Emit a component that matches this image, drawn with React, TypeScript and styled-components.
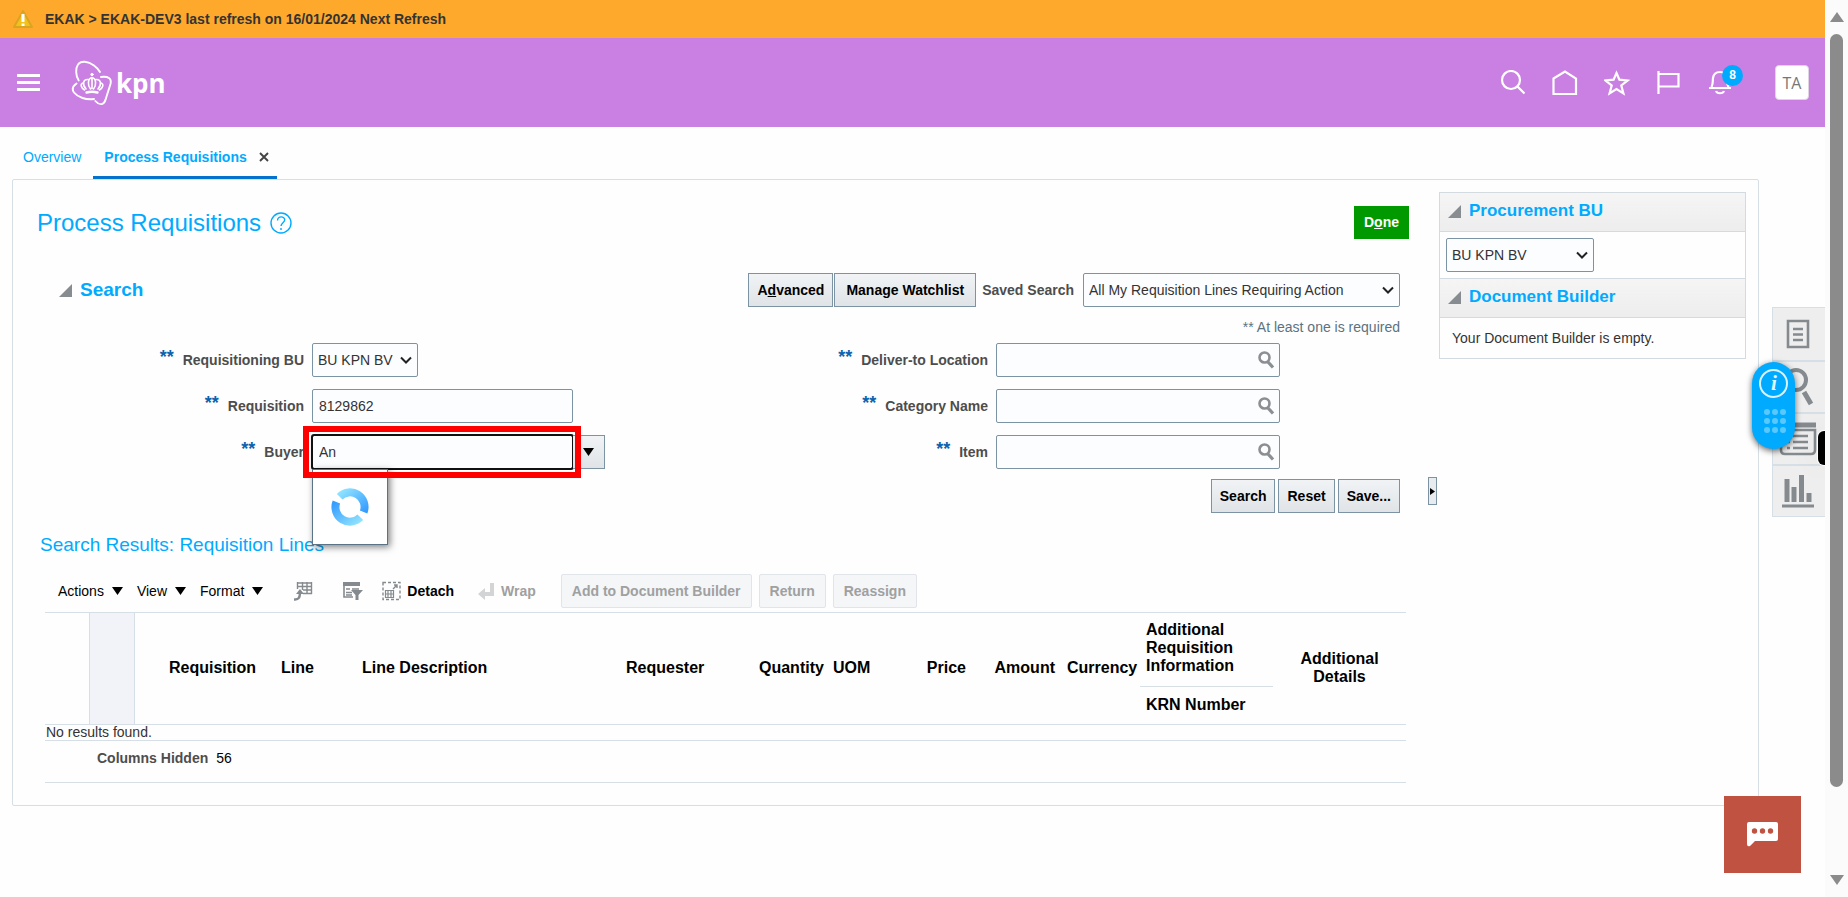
import React from "react";
import styled, { createGlobalStyle } from "styled-components";

const GlobalStyle = createGlobalStyle`
  *, *::before, *::after { box-sizing: border-box; }
  body { margin: 0; background: #fefefe; }
  body, button, input, select { font-family: "Liberation Sans", Arial, sans-serif; font-size: 14px; color: #333; }
  h1, h2, p { margin: 0; }
  button { cursor: pointer; }
`;

const Page = styled.div`display: flex; min-height: 100vh;`;
const Main = styled.div`flex: 1; min-width: 0; position: relative;`;

const ScrollTrack = styled.div`
  width: 23px; background: #fbfbfb; display: flex; flex-direction: column; align-items: center;
  padding: 12px 0; gap: 12px; height: 100vh; position: sticky; top: 0;
`;
const ScrollThumb = styled.div`width: 13px; flex: 1; margin-bottom: 76px; border-radius: 7px; background: #8b8b8b;`;

const Notice = styled.div`
  height: 38px; background: #ffa92c; display: flex; align-items: center; gap: 12px; padding-left: 13px; font-weight: bold;
`;
const Header = styled.header`
  height: 89px; background: #c980e2; display: flex; align-items: center; padding: 0 16px 0 14px;
`;
const IconButton = styled.button`
  border: 0; background: none; padding: 0; width: 28px; height: 28px; display: grid; place-items: center; position: relative;
`;
const HeaderActions = styled.nav`display: flex; align-items: center; gap: 24px; margin-left: auto;`;
const Logo = styled.a`margin-left: 28px; display: flex;`;
const Badge = styled.span`
  position: absolute; left: 15px; top: -4px; width: 21px; height: 21px; border-radius: 50%; background: #0af;
  color: #fff; font-size: 12px; font-weight: bold; line-height: 21px; text-align: center;
`;
const Avatar = styled.button`
  width: 34px; height: 35px; border: 1px solid #ded4e6; border-radius: 4px; background: #fff; color: #777;
  font: 16px "Open Sans", sans-serif; padding: 0; margin-left: 16px;
`;

const Tabs = styled.nav`display: flex; gap: 4px; height: 52px; padding-left: 12px;`;
const Tab = styled.div<{ $active?: boolean }>`
  display: flex; align-items: center; gap: 12px; padding: 12px 8px 0 11px; padding-bottom: ${(p) => (p.$active ? 1 : 4)}px;
  border-bottom: ${(p) => (p.$active ? "3px solid #0572ce" : "0")};
  a { color: #0af; text-decoration: none; font-weight: ${(p) => (p.$active ? "bold" : "normal")}; }
`;
const CloseButton = styled.button`border: 0; background: none; padding: 0; width: 10px; height: 10px; display: flex;`;

const Body = styled.div`display: flex; align-items: flex-start; padding-left: 12px;`;
const Panel = styled.main`
  flex: 1; min-width: 0; border: 1px solid #d6dfe6; border-radius: 2px; display: flex; align-items: flex-start; padding-bottom: 22px;
`;
const Work = styled.div`flex: 1; min-width: 0; padding: 26px 19px 0 24px;`;
const TitleRow = styled.div`display: flex; align-items: center; justify-content: space-between; height: 33px;`;
const Title = styled.h1`
  display: flex; align-items: center; gap: 9px; font-size: 24px; font-weight: normal; color: #0af;
`;
const DoneButton = styled.button`
  height: 33px; padding: 0 10px 2px; border: 0; background: #090; color: #fff; font-weight: bold;
`;
const SearchBar = styled.div`
  display: flex; align-items: center; margin-top: 34px; padding: 0 9px 0 22px; height: 34px;
`;
const SectionTitle = styled.h2<{ $size: number }>`
  display: flex; align-items: center; gap: 8px; color: #0af; font-size: ${(p) => p.$size}px;
`;
const Spacer = styled.div`flex: 1;`;
const Button = styled.button<{ $pad?: number }>`
  height: 34px; padding: 0 ${(p) => p.$pad ?? 8}px; border: 1px solid #7b93a3; background: linear-gradient(#f1f3f5, #e0e4e7);
  color: #000; font-weight: bold; white-space: nowrap;
`;
const BarButtons = styled.div`display: flex; gap: 1px;`;
const SavedLabel = styled.label`font-weight: bold; color: #4d4d4d; padding: 0 9px 0 6px;`;
const SelectBox = styled.div<{ $width: number }>`
  position: relative; width: ${(p) => p.$width}px; height: 34px;
  select {
    appearance: none; width: 100%; height: 100%; padding: 0 5px; border: 1px solid #7b93a3; border-radius: 2px;
    background: #fcfdff;
  }
  svg { position: absolute; right: 6px; top: 13px; pointer-events: none; }
`;
const Hint = styled.p`text-align: right; color: #5b7380; padding-right: 9px; line-height: 16px; margin-top: 12px;`;

const Fields = styled.div`display: grid; grid-template-columns: 684px 1fr; margin-top: 8px;`;
const FieldColumn = styled.div<{ $label: number }>`
  display: grid; grid-template-columns: ${(p) => p.$label}px 1fr; gap: 12px 8px; grid-auto-rows: 34px;
`;
const FieldLabel = styled.label`
  display: flex; align-items: center; justify-content: flex-end; gap: 9px; font-weight: bold; color: #4d4d4d;
  span { color: #0b62ad; font-size: 18px; line-height: 28px; height: 34px; }
`;
const TextInput = styled.input<{ $width: number }>`
  width: ${(p) => p.$width}px; height: 34px; border: 1px solid #7b93a3; border-radius: 2px; background: #fcfdff; padding: 0 6px;
`;
const LookupBox = styled.div`
  position: relative; width: 284px; height: 34px;
  button { position: absolute; right: 5px; top: 8px; width: 18px; height: 18px; padding: 0; border: 0; background: none; }
`;
const Combo = styled.div`
  position: relative; display: flex; height: 34px;
  input { outline: 2px solid #111; outline-offset: -1px; border-color: #111; }
`;
const ComboButton = styled(Button)`width: 32px; padding: 0; border-left: 0; display: grid; place-items: center;`;
const Highlight = styled.div`
  position: absolute; left: -9px; top: -9px; width: 278px; height: 52px; border: 6px solid #f00; pointer-events: none; z-index: 3;
`;
const LoadingPopup = styled.div`
  position: absolute; left: 0; top: 34px; width: 76px; height: 76px; border: 1px solid #5b7386; background: #fff;
  box-shadow: 2px 2px 7px rgba(0, 0, 0, 0.5); display: grid; place-items: center; z-index: 2;
`;
const SearchActions = styled.div`display: flex; justify-content: flex-end; gap: 3px; padding-right: 9px; margin-top: 10px;`;

const ResultsTitle = styled.h2`font-size: 19px; font-weight: normal; color: #0af; padding-left: 3px; margin-top: 20px; line-height: 24px;`;
const Toolbar = styled.div`display: flex; align-items: center; height: 34px; margin-top: 17px; padding-left: 21px;`;
const Menus = styled.div`display: flex; gap: 14px; margin-right: 31px;`;
const MenuButton = styled.button`
  display: flex; align-items: center; gap: 8px; border: 0; background: none; padding: 0; color: #000;
`;
const ToolButton = styled.button<{ $after: number }>`
  display: flex; align-items: center; gap: 6px; border: 0; background: none; padding: 0; font-weight: bold; color: #000;
  margin-right: ${(p) => p.$after}px;
  &:disabled { color: #a0a0a0; }
`;
const MutedButton = styled.button`
  height: 34px; padding: 0 10px; border: 1px solid #e1e5e9; border-radius: 2px; background: #f4f6f8; color: #a0a0a0;
  font-weight: bold; margin-right: 7px;
`;

const TableWrap = styled.div`margin: 4px 3px 0 8px; border-top: 1px solid #d6dfe6;`;
const Table = styled.table`
  width: 100%; border-collapse: collapse; table-layout: fixed;
  tr { border-bottom: 1px solid #d6dfe6; }
`;
const Th = styled.th<{ $align?: string }>`
  padding: 0 6px; text-align: ${(p) => p.$align || "left"}; font-size: 16px; line-height: 18px; color: #000;
`;
const RowHandle = styled.th`background: #f2f3f8; border-left: 1px solid #d6dfe6; border-right: 1px solid #d6dfe6;`;
const GroupTh = styled(Th)`height: 73px; padding: 0 40px 3px 6px; border-bottom: 1px solid #d6dfe6;`;
const SubTh = styled(Th)`height: 38px;`;
const EmptyCell = styled.td`height: 16px; padding: 0 1px; line-height: 15px;`;
const TableFooter = styled.div`
  height: 42px; padding: 9px 0 0 52px; border-bottom: 1px solid #d6dfe6; display: flex; gap: 8px; color: #000; line-height: 16px;
  b { color: #4d4d4d; }
`;

const Splitter = styled.button`
  align-self: flex-start; width: 9px; height: 28px; margin-top: 297px; padding: 0; border: 1px solid #7b93a3;
  background: #e8ecef; display: grid; place-items: center;
`;
const Aside = styled.aside`width: 307px; margin: 12px 12px 0 2px; border: 1px solid #d3dae0; border-top: 0;`;
const AsideHeader = styled.div`
  height: 40px; border-top: 1px solid #d3dae0; border-bottom: 1px solid #d3dae0; background: linear-gradient(#f5f5f5, #ededed);
  padding: 0 8px 2px; display: flex; align-items: center;
`;
const AsideBody = styled.div<{ $inset: number }>`padding: 6px ${(p) => p.$inset}px; line-height: 28px;`;

const Rail = styled.nav`
  position: relative; width: 53px; margin: 128px 0 0 13px; border: 1px solid #d6dfe6; border-right: 0; background: #eee;
`;
const RailButton = styled.button`
  display: grid; place-items: center; width: 52px; height: 52px; padding: 0 2px 1px 0; border: 0; background: none;
  & + & { border-top: 2px solid #d6dfe6; }
`;
const GuidePill = styled.button`
  position: absolute; left: -21px; top: 54px; width: 43px; height: 87px; border: 0; border-radius: 22px; background: #0af; padding: 0;
  box-shadow: 0 2px 6px rgba(0, 0, 0, 0.6); display: grid; place-items: center;
`;
const EdgeTab = styled.div`
  position: absolute; right: 0; top: 123px; width: 7px; height: 34px; background: #000; border-radius: 6px 0 0 6px;
  box-shadow: 0 0 0 1px #fff, 0 0 30px rgba(0, 0, 0, 0.12); clip-path: inset(-60px 0 -60px -60px);
`;
const ChatButton = styled.button`
  position: fixed; right: 47px; bottom: 24px; width: 77px; height: 77px; border: 0; padding: 0; background: #bf5240;
  display: grid; place-items: center;
`;

const Disclosure = () => (
  <svg width="13" height="13" viewBox="0 0 13 13"><path d="M13 0v13H0z" fill="#878c90" /></svg>
);
const Chevron = () => (
  <svg width="12" height="9" viewBox="0 0 12 9"><path d="M1 1.500l5 5 5-5" fill="none" stroke="#222" strokeWidth="2" /></svg>
);
const Caret = () => (
  <svg width="11" height="8" viewBox="0 0 11 8"><path d="M0 0h11L5.500 8z" fill="#000" /></svg>
);
const Lens = () => (
  <svg width="18" height="18" viewBox="0 0 18 18" fill="none" stroke="#8b8f92">
    <circle cx="7.500" cy="6.500" r="5" strokeWidth="2.600" /><path d="M10.500 10.500l5.500 6" strokeWidth="3.200" />
  </svg>
);

const KpnLogo = () => (
  <svg width="98" height="48" viewBox="0 0 98 48" fill="none" stroke="#fff" strokeWidth="1.900" strokeLinecap="round">
    <path d="M8.700 21.500C5.500 17 5.500 9 8 5.500 11 1.500 18 2 24 6.500c3 2.300 5 4.500 6 6.500" />
    <path d="M31 18c7-1 11 1.500 9.500 7l-3.500 11c-1.500 5-2 8.500-5 9-3 .5-5-1-6.700-3" />
    <path d="M6.500 24.500C3 27 1.500 30 4 33.500c4 5 12 7.500 20 6.500" />
    <circle cx="22" cy="15.500" r="1.200" fill="#fff" strokeWidth="1" />
    <path d="M22 18.500v11M22 18.500c-4.500 1-4.500 8-1.500 11.500M22 18.500c4.500 1 4.500 8 1.500 11.500M18 20.500c-5-.5-6 5-2 9.500M26 20.500c5-.5 6 5 2 9.500M13 24c-3.500 1-1.500 5.500 1.500 7M31 24c3.500 1 1.500 5.500-1.500 7" strokeWidth="1.600" />
    <path d="M16.500 33.500c4-1 7-1 11 0" strokeWidth="2.400" />
    <text x="46" y="34" fill="#fff" stroke="none" fontFamily="Open Sans, sans-serif" fontWeight="bold" fontSize="26">kpn</text>
  </svg>
);

const columns: { w: number; label?: string; align?: string }[] = [
  { w: 44 }, { w: 45 }, { w: 29 },
  { w: 112, label: "Requisition" }, { w: 81, label: "Line" }, { w: 264, label: "Line Description" },
  { w: 133, label: "Requester" }, { w: 74, label: "Quantity", align: "right" }, { w: 64, label: "UOM" },
  { w: 81, label: "Price", align: "right" }, { w: 89, label: "Amount", align: "right" }, { w: 79, label: "Currency" },
  { w: 133 }, { w: 133 },
];

const lookups = [
  { id: "deliver", label: "Deliver-to Location" },
  { id: "category", label: "Category Name" },
  { id: "item", label: "Item" },
];

export default function App() {
  return (
    <Page>
      <GlobalStyle />
      <Main>
        <Notice role="status">
          <svg width="20" height="18" viewBox="0 0 20 18">
            <path d="M10 1L19 17H1z" fill="#f2c11c" stroke="#d9a520" strokeWidth="2" strokeLinejoin="round" />
            <path d="M10 4v8M10 13.500v2.500" stroke="#fff" strokeWidth="3" />
          </svg>
          <span>EKAK &gt; EKAK-DEV3 last refresh on 16/01/2024 Next Refresh</span>
        </Notice>
        <Header>
          <IconButton aria-label="Navigator">
            <svg width="23" height="18" viewBox="0 0 23 18"><path d="M0 1.500h23M0 8.500h23M0 15.500h23" stroke="#fff" strokeWidth="3" /></svg>
          </IconButton>
          <Logo href="#" aria-label="kpn"><KpnLogo /></Logo>
          <HeaderActions>
            <IconButton aria-label="Search">
              <svg width="26" height="26" viewBox="0 0 26 26" fill="none" stroke="#fff" strokeWidth="2.200"><circle cx="11" cy="10" r="9" /><path d="M17.500 16.500l7 7" /></svg>
            </IconButton>
            <IconButton aria-label="Home">
              <svg width="26" height="26" viewBox="0 0 26 26" fill="none" stroke="#fff" strokeWidth="2.200"><path d="M1.500 8.500L13 1.500l11 7V24H1.500z" /></svg>
            </IconButton>
            <IconButton aria-label="Favorites">
              <svg width="27" height="26" viewBox="0 0 27 26" fill="none" stroke="#fff" strokeWidth="2.200"><path d="M12.500 3l2.900 6.700 8.200.8-6.300 5 2.100 7.900-6.900-4.300-6.900 4.300 2.100-7.900-6.300-5 8.200-.8z" /></svg>
            </IconButton>
            <IconButton aria-label="Watchlist">
              <svg width="24" height="26" viewBox="0 0 24 26" fill="none" stroke="#fff" strokeWidth="2.200"><path d="M1.500 1v23M1.500 4h20v12.500h-20" /></svg>
            </IconButton>
            <IconButton aria-label="Notifications, 8 unread">
              <svg width="26" height="26" viewBox="0 0 26 26" fill="none" stroke="#fff" strokeWidth="2.200"><path d="M1 18h22M3.500 17c2-4 1-6 1.500-9 .6-4 3.500-6 7-6s6 2 6.500 6c.4 3 0 5 2 9M8 21c1 3 7 3 8 0" /></svg>
              <Badge>8</Badge>
            </IconButton>
            <Avatar>TA</Avatar>
          </HeaderActions>
        </Header>
        <Tabs>
          <Tab><a href="#overview">Overview</a></Tab>
          <Tab $active>
            <a href="#process">Process Requisitions</a>
            <CloseButton aria-label="Close tab">
              <svg width="10" height="10" viewBox="0 0 10 10"><path d="M1 1l8 8M9 1L1 9" stroke="#444" strokeWidth="1.900" /></svg>
            </CloseButton>
          </Tab>
        </Tabs>
        <Body>
          <Panel>
            <Work>
              <TitleRow>
                <Title>
                  Process Requisitions
                  <svg width="22" height="22" viewBox="0 0 22 22" fill="none" stroke="#0af" strokeWidth="1.400">
                    <circle cx="11" cy="11" r="10" /><path d="M7.500 8.500c0-5 7.500-4.500 7.200-.5C14.500 10.500 11 11 11 14M11 16v2" />
                  </svg>
                </Title>
                <DoneButton>D<u>o</u>ne</DoneButton>
              </TitleRow>
              <SearchBar>
                <SectionTitle $size={19}><Disclosure />Search</SectionTitle>
                <Spacer />
                <BarButtons>
                  <Button>A<u>d</u>vanced</Button>
                  <Button $pad={11}>Manage Watchlist</Button>
                </BarButtons>
                <SavedLabel htmlFor="saved">Saved Search</SavedLabel>
                <SelectBox $width={317}>
                  <select id="saved"><option>All My Requisition Lines Requiring Action</option></select><Chevron />
                </SelectBox>
              </SearchBar>
              <Hint>** At least one is required</Hint>
              <Fields>
                <FieldColumn $label={267}>
                  <FieldLabel htmlFor="bu"><span>**</span>Requisitioning BU</FieldLabel>
                  <SelectBox $width={106}><select id="bu"><option>BU KPN BV</option></select><Chevron /></SelectBox>
                  <FieldLabel htmlFor="req"><span>**</span>Requisition</FieldLabel>
                  <TextInput id="req" $width={261} defaultValue="8129862" />
                  <FieldLabel htmlFor="buyer"><span>**</span>Buyer</FieldLabel>
                  <Combo>
                    <TextInput id="buyer" $width={261} defaultValue="An" />
                    <ComboButton aria-label="Buyer choices"><Caret /></ComboButton>
                    <LoadingPopup>
                      <svg width="40" height="40" viewBox="0 0 40 40" fill="none" strokeWidth="8">
                        <path d="M9.700 9.700A14.500 14.500 0 0 1 33.600 25" stroke="url(#spinA)" />
                        <path d="M30.300 30.300A14.500 14.500 0 0 1 6.400 15" stroke="url(#spinB)" />
                        <defs>
                          <linearGradient id="spinA" x1="0" y1="0" x2="1" y2="1"><stop stopColor="#8fe3ff" /><stop offset="1" stopColor="#369cff" /></linearGradient>
                          <linearGradient id="spinB" x1="1" y1="1" x2="0" y2="0"><stop stopColor="#8fe3ff" /><stop offset="1" stopColor="#369cff" /></linearGradient>
                        </defs>
                      </svg>
                    </LoadingPopup>
                    <Highlight />
                  </Combo>
                </FieldColumn>
                <FieldColumn $label={267}>
                  {lookups.map((f) => (
                    <React.Fragment key={f.id}>
                      <FieldLabel htmlFor={f.id}><span>**</span>{f.label}</FieldLabel>
                      <LookupBox>
                        <TextInput id={f.id} $width={284} />
                        <button aria-label={"Search " + f.label}><Lens /></button>
                      </LookupBox>
                    </React.Fragment>
                  ))}
                </FieldColumn>
              </Fields>
              <SearchActions>
                <Button>Search</Button><Button>Reset</Button><Button>Save...</Button>
              </SearchActions>
              <ResultsTitle>Search Results: Requisition Lines</ResultsTitle>
              <Toolbar>
                <Menus>
                  <MenuButton>Actions<Caret /></MenuButton>
                  <MenuButton>View<Caret /></MenuButton>
                  <MenuButton>Format<Caret /></MenuButton>
                </Menus>
                <ToolButton $after={30} aria-label="Freeze">
                  <svg width="19" height="20" viewBox="0 0 19 20" fill="none" stroke="#858a8e"><path d="M3 2h15M3 5.500h15M9 9h9M9 12.500h9M3.500 1v7M8.500 1v8M13 1v12M17.500 1v12" strokeWidth="1.400" /><path d="M0 18.500c5 .5 6-2 6-8" strokeWidth="2.400" /><path d="M2 13l4-5 4 5z" fill="#858a8e" stroke="none" /></svg>
                </ToolButton>
                <ToolButton $after={19} aria-label="Query by example">
                  <svg width="20" height="20" viewBox="0 0 20 20"><path d="M0 1h17v4H0z" fill="#858a8e" /><path d="M1 4v12h9M3 8h4M3 11.500h6M9 8h7M3 14h6" fill="none" stroke="#858a8e" strokeWidth="1.600" /><path d="M8 9h12l-4.500 5v5h-3v-5z" fill="#858a8e" /></svg>
                </ToolButton>
                <ToolButton $after={24}>
                  <svg width="19" height="20" viewBox="0 0 19 20" fill="none" stroke="#858a8e"><path d="M1 1.500h17v17H1z" strokeDasharray="3 2" strokeWidth="1.400" /><path d="M3.500 9.500h8v7h-8zM3.500 13h8M6 9.500v7M9 9.500v7" strokeWidth="1.200" /><path d="M11 8l4-4M12 4h3v3" strokeWidth="1.400" /></svg>
                  Detach
                </ToolButton>
                <ToolButton $after={25} disabled>
                  <svg width="17" height="17" viewBox="0 0 17 17"><path d="M16 0h-4v9H7V5L0 11l7 6v-4h9V0z" fill="#d2d4d5" /></svg>
                  Wrap
                </ToolButton>
                <MutedButton disabled>Add to Document Builder</MutedButton>
                <MutedButton disabled>Return</MutedButton>
                <MutedButton disabled>Reassign</MutedButton>
              </Toolbar>
              <TableWrap>
                <Table>
                  <colgroup>{columns.map((c, i) => <col key={i} width={c.w} />)}</colgroup>
                  <thead>
                    <tr>
                      <Th rowSpan={2} /><RowHandle rowSpan={2} /><Th rowSpan={2} />
                      {columns.filter((c) => c.label).map((c) => (
                        <Th key={c.label} rowSpan={2} $align={c.align}>{c.label}</Th>
                      ))}
                      <GroupTh>Additional Requisition Information</GroupTh>
                      <Th rowSpan={2} $align="center">Additional<br />Details</Th>
                    </tr>
                    <tr><SubTh>KRN Number</SubTh></tr>
                  </thead>
                  <tbody><tr><EmptyCell colSpan={14}>No results found.</EmptyCell></tr></tbody>
                </Table>
                <TableFooter><b>Columns Hidden</b><span>56</span></TableFooter>
              </TableWrap>
            </Work>
            <Splitter aria-label="Collapse pane">
              <svg width="5" height="7" viewBox="0 0 5 7"><path d="M0 0l5 3.500L0 7z" fill="#000" /></svg>
            </Splitter>
            <Aside>
              <AsideHeader><SectionTitle $size={17}><Disclosure />Procurement BU</SectionTitle></AsideHeader>
              <AsideBody $inset={6}>
                <SelectBox $width={148}><select aria-label="Procurement BU"><option>BU KPN BV</option></select><Chevron /></SelectBox>
              </AsideBody>
              <AsideHeader><SectionTitle $size={17}><Disclosure />Document Builder</SectionTitle></AsideHeader>
              <AsideBody $inset={12}>Your Document Builder is empty.</AsideBody>
            </Aside>
          </Panel>
          <Rail aria-label="Drawer">
            <RailButton aria-label="Document">
              <svg width="24" height="30" viewBox="0 0 24 30" fill="none" stroke="#858a8e"><path d="M2 2h20v26H2z" strokeWidth="2.600" /><path d="M7 10h10M7 15.500h10M7 21h10" strokeWidth="2.400" /></svg>
            </RailButton>
            <RailButton aria-label="Find">
              <svg width="32" height="38" viewBox="0 0 32 38" fill="none" stroke="#858a8e"><circle cx="14" cy="12" r="10" strokeWidth="4" /><path d="M22 24l7 12" strokeWidth="5" /></svg>
            </RailButton>
            <RailButton aria-label="List">
              <svg width="38" height="34" viewBox="0 0 38 34" fill="none" stroke="#858a8e"><path d="M2 8v20q0 4 4 4h26q4 0 4-4V8z" strokeWidth="2.600" /><path d="M1 3h36" strokeWidth="5" /><path d="M8 14h3M14 14h15M8 20h3M14 20h15M8 26h3M14 26h15" strokeWidth="2.400" /></svg>
            </RailButton>
            <RailButton aria-label="Analytics">
              <svg width="34" height="34" viewBox="0 0 34 34" stroke="#858a8e" fill="none"><path d="M6 5v23M13 13v15M20.500 1v27M28 19v9" strokeWidth="5" /><path d="M1 32h32" strokeWidth="3" /></svg>
            </RailButton>
            <GuidePill aria-label="Guide">
              <svg width="43" height="87" viewBox="0 0 43 87">
                <circle cx="21.500" cy="21.500" r="13.500" fill="none" stroke="#d9f2ff" strokeWidth="2" />
                <text x="22" y="28" textAnchor="middle" fill="#e6f6ff" fontFamily="Liberation Serif, serif" fontStyle="italic" fontWeight="bold" fontSize="21">i</text>
                {[50, 59, 68].map((y) => [15, 23, 31].map((x) => <circle key={x + "-" + y} cx={x} cy={y} r="3" fill="#59c8ff" />))}
              </svg>
            </GuidePill>
            <EdgeTab />
          </Rail>
        </Body>
        <ChatButton aria-label="Chat">
          <svg width="31" height="25" viewBox="0 0 31 25"><path d="M2 0h27q2 0 2 2v15q0 2-2 2H8l-5 5q-3 1-3-2V2q0-2 2-2z" fill="#fff" /><g fill="#bf5240"><circle cx="7.500" cy="9" r="2.700" /><circle cx="15.500" cy="9" r="2.700" /><circle cx="23.500" cy="9" r="2.700" /></g></svg>
        </ChatButton>
      </Main>
      <ScrollTrack aria-hidden="true">
        <svg width="14" height="10" viewBox="0 0 14 10"><path d="M7 0l7 10H0z" fill="#8b8b8b" /></svg>
        <ScrollThumb />
        <svg width="14" height="10" viewBox="0 0 14 10"><path d="M0 0h14L7 10z" fill="#8b8b8b" /></svg>
      </ScrollTrack>
    </Page>
  );
}
